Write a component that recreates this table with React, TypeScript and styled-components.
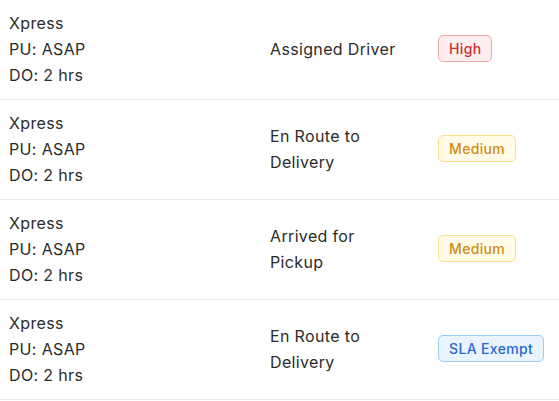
import React from "react";
import styled, { createGlobalStyle } from "styled-components";

const Global = createGlobalStyle`
  html, body { margin: 0; padding: 0; background: #fff; }
  body { font-family: Inter, "Noto Sans", "Liberation Sans", sans-serif; color: #2b2b2b; }
`;

type Level = "high" | "medium" | "sla";

const palette: Record<Level, { bg: string; border: string; fg: string }> = {
  high: { bg: "#fdeeee", border: "#f4a7a7", fg: "#cc2f2f" },
  medium: { bg: "#fffbe6", border: "#fbe08a", fg: "#d08c17" },
  sla: { bg: "#e9f4ff", border: "#99cdf7", fg: "#2a66d1" },
};

const Table = styled.div`
  width: 559px;
  display: flex;
  flex-direction: column;
`;

const Row = styled.div`
  display: grid;
  grid-template-columns: 261px 168px 1fr;
  align-items: center;
  height: 100px;
  box-sizing: border-box;
  padding-bottom: 2px;
  border-bottom: 1px solid #e6e6e6;
`;

const Cell = styled.div`
  padding: 0 9px;
  font-size: 16px;
  line-height: 26px;
  letter-spacing: 0.35px;
`;

const StatusText = styled.div`
  max-width: 138px;
`;

const Badge = styled.span<{ $level: Level }>`
  display: inline-flex;
  align-items: center;
  height: 27px;
  box-sizing: border-box;
  padding: 0 10px;
  border-radius: 5px;
  font-size: 14px;
  font-weight: 500;
  letter-spacing: 0.35px;
  background: ${(p) => palette[p.$level].bg};
  border: 1px solid ${(p) => palette[p.$level].border};
  color: ${(p) => palette[p.$level].fg};
`;

const rows: { status: string; level: Level; label: string }[] = [
  { status: "Assigned Driver", level: "high", label: "High" },
  { status: "En Route to Delivery", level: "medium", label: "Medium" },
  { status: "Arrived for Pickup", level: "medium", label: "Medium" },
  { status: "En Route to Delivery", level: "sla", label: "SLA Exempt" },
];

export default function App() {
  return (
    <>
      <Global />
      <Table>
        {rows.map((r, i) => (
          <Row key={i}>
            <Cell>
              <div>Xpress</div>
              <div>PU: ASAP</div>
              <div>DO: 2 hrs</div>
            </Cell>
            <Cell>
              <StatusText>{r.status}</StatusText>
            </Cell>
            <Cell>
              <Badge $level={r.level}>{r.label}</Badge>
            </Cell>
          </Row>
        ))}
      </Table>
    </>
  );
}
